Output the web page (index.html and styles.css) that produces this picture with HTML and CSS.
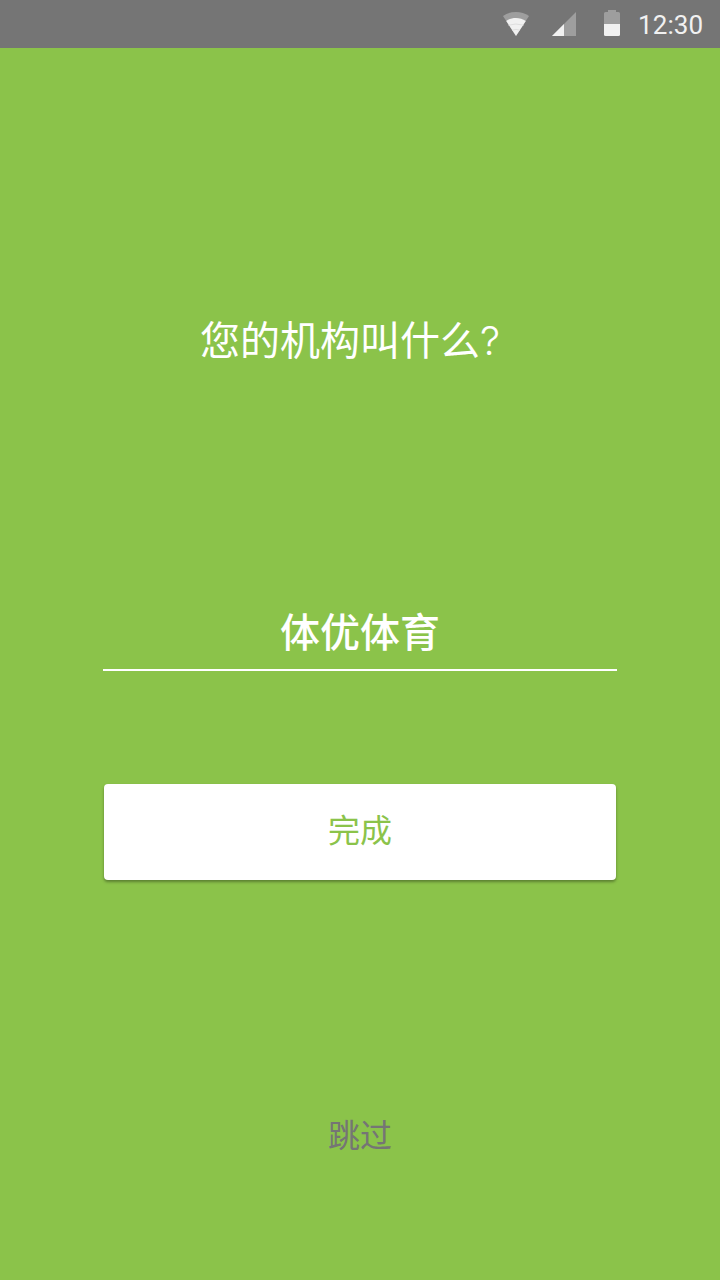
FILE: index.html
```html
<!DOCTYPE html>
<html lang="zh-CN">
<head>
<meta charset="utf-8">
<title>您的机构叫什么?</title>
<link rel="stylesheet" href="styles.css">
</head>
<body>
<div class="screen">
  <header class="status-bar">
    <svg class="icon-wifi" width="26" height="24" viewBox="0 0 26 24">
      <path class="dim" d="M13 24 0 4C3.800 1.300 8.200 0 13 0s9.200 1.300 13 4z"/>
      <path class="lit" d="M13 24 3.200 8.900C6.100 7 9.400 6 13 6s6.900 1 9.800 2.900z"/>
      <path class="seam" d="M5.500 13.200Q13 10.800 20.500 13.200M9 18.200Q13 16.600 17 18.200"/>
    </svg>
    <svg class="icon-signal" width="24" height="24" viewBox="0 0 24 24">
      <path class="dim" d="M0 24 24 0V24z"/>
      <path class="lit" d="M0 24 12 12V24z"/>
    </svg>
    <svg class="icon-battery" width="16" height="26" viewBox="0 0 16 26">
      <path class="dim" d="M4 0H12V2H14.500Q16 2 16 3.500V14H0V3.500Q0 2 1.500 2H4z"/>
      <path class="lit" d="M0 14H16V24.500Q16 26 14.500 26H1.500Q0 26 0 24.500z"/>
    </svg>
    <span class="clock">12:30</span>
  </header>
  <main class="form">
    <h1 class="question">您的机构叫什么<span class="mark">?</span></h1>
    <div class="field">体优体育</div>
    <button class="submit" type="button">完成</button>
    <a class="skip">跳过</a>
  </main>
</div>
</body>
</html>
```
FILE: styles.css
```css
body {
  margin: 0;
  font-family: "Noto Sans CJK SC", sans-serif;
}
.screen {
  width: 720px;
  height: 1280px;
  overflow: hidden;
  background: #8bc34a;
}
.status-bar {
  display: flex;
  height: 48px;
  box-sizing: border-box;
  padding: 0 17px 0 0;
  justify-content: flex-end;
  align-items: flex-start;
  background: #757575;
}
.dim { fill: #9e9e9e; }
.lit { fill: #f1f1f1; }
.seam {
  fill: none;
  stroke: #dedede;
}
.icon-wifi { margin-top: 12px; }
.icon-signal { margin: 12px 0 0 23px; }
.icon-battery { margin: 10px 0 0 28px; }
.clock {
  width: 65px;
  margin-left: 18px;
  font: 26px/50px Roboto, sans-serif;
  letter-spacing: 0.1px;
  color: #f1f1f1;
  white-space: nowrap;
}
.form {
  display: flex;
  flex-direction: column;
  align-items: center;
}
.question {
  width: 320px;
  height: 60px;
  margin: 260px 0 0;
  font-size: 40px;
  line-height: 60px;
  font-weight: 400;
  white-space: nowrap;
  color: #fff;
}
.question .mark {
  font-family: Inter, sans-serif;
  font-weight: 350;
  line-height: 1;
}
.field {
  width: 514px;
  height: 69px;
  margin-top: 232px;
  border-bottom: 2px solid #fff;
  font-size: 40px;
  line-height: 60px;
  font-weight: 500;
  text-align: center;
  color: #fff;
}
.submit {
  width: 512px;
  height: 96px;
  margin-top: 113px;
  padding: 0 0 8px;
  border: 0;
  border-radius: 4px;
  background: #fff;
  box-shadow: 0 2px 3px rgba(0, 0, 0, 0.35);
  font: 400 32px/48px "Noto Sans CJK SC", sans-serif;
  color: #8bc34a;
}
.skip {
  margin-top: 229px;
  font-size: 32px;
  line-height: 48px;
  font-weight: 400;
  color: #757575;
}
```
